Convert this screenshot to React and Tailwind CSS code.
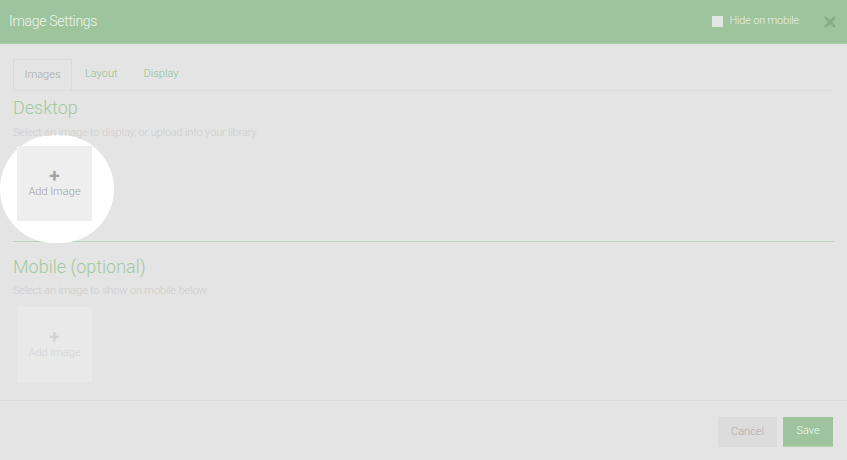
import React from "react";

const AddImageBox = ({ dim }) => (
  <button
    className={
      "relative z-10 flex h-[75px] w-[75px] flex-col items-center justify-center " +
      (dim ? "bg-[#e9e9e9] text-[#d3d3d3]" : "bg-[#eeeeee] text-[#a3a3a3]")
    }
  >
    <span className="text-[19px] font-bold leading-[14px]">+</span>
    <span className="mt-[2px] text-[11px] font-light leading-[14px]">Add Image</span>
  </button>
);

const App = () => {
  return (
    <div className="flex h-[460px] w-[847px] flex-col bg-[#e4e4e4] font-['Roboto',sans-serif]">
      {/* Header */}
      <div className="flex h-[44px] shrink-0 items-center justify-between border-b border-[#accdab] bg-[#9dc49c] pl-[9px] pr-[10px]">
        <h1 className="text-[14px] font-light tracking-[-0.3px] text-[#eef4ee]">Image Settings</h1>
        <div className="flex items-center">
          <label className="flex items-center gap-[7px] text-[11px] font-light tracking-[-0.2px] text-[#e9f1e9]">
            <span className="h-[11px] w-[11px] bg-[#e2e6e2]" />
            Hide on mobile
          </label>
          <svg className="ml-[24px] h-[14px] w-[14px]" viewBox="0 0 14 14">
            <path d="M2 2 L12 12 M12 2 L2 12" stroke="#86ae86" strokeWidth="2.6" />
          </svg>
        </div>
      </div>

      {/* Body */}
      <div className="flex-1 px-[13px] pt-[15px]">
        {/* Tabs */}
        <div className="flex h-[32px] border-b border-[#dcdcdc] text-[11px] font-light">
          <div className="flex w-[59px] items-center justify-center border border-b-0 border-[#dadada] bg-[#e4e4e4] text-[#a8a8a8]">
            Images
          </div>
          <div className="flex items-center px-[13px] text-[#8fc28f]">Layout</div>
          <div className="flex items-center px-[13px] text-[#8fc28f]">Display</div>
        </div>

        {/* Desktop */}
        <div className="relative">
          <div className="absolute left-[-13px] top-[40px] z-0 h-[108px] w-[114px] rounded-full bg-white" />
          <h2 className="relative z-10 mt-[4px] text-[18px] font-light leading-[26px] text-[#9fca9f]">
            Desktop
          </h2>
          <p className="relative z-10 mt-[3px] text-[11px] font-light tracking-[-0.15px] leading-[18px] text-[#cdcdcd]">
            Select an image to display, or upload into your library
          </p>
          <div className="mt-[4px] pl-[4px]">
            <AddImageBox />
          </div>
        </div>

        <div className="mt-[20px] h-px bg-[#bad4b9]" />

        {/* Mobile */}
        <h2 className="mt-[12px] text-[18px] font-light leading-[26px] text-[#9fca9f]">
          Mobile (optional)
        </h2>
        <p className="mt-[2px] text-[11px] font-light tracking-[-0.15px] leading-[18px] text-[#cdcdcd]">
          Select an image to show on mobile below
        </p>
        <div className="mt-[7px] pl-[4px]">
          <AddImageBox dim />
        </div>
      </div>

      {/* Footer */}
      <div className="flex h-[60px] shrink-0 items-start justify-end gap-[6px] border-t border-[#dcdcdc] pr-[14px] pt-[16px]">
        <button className="h-[30px] w-[59px] bg-[#dcdcdc] text-[11px] font-light text-[#ababab]">Cancel</button>
        <button className="h-[30px] w-[50px] border-b border-[#b6d2b5] bg-[#9dc49c] text-[11px] font-light text-[#f3f8f3]">
          Save
        </button>
      </div>
    </div>
  );
};

export default App;
